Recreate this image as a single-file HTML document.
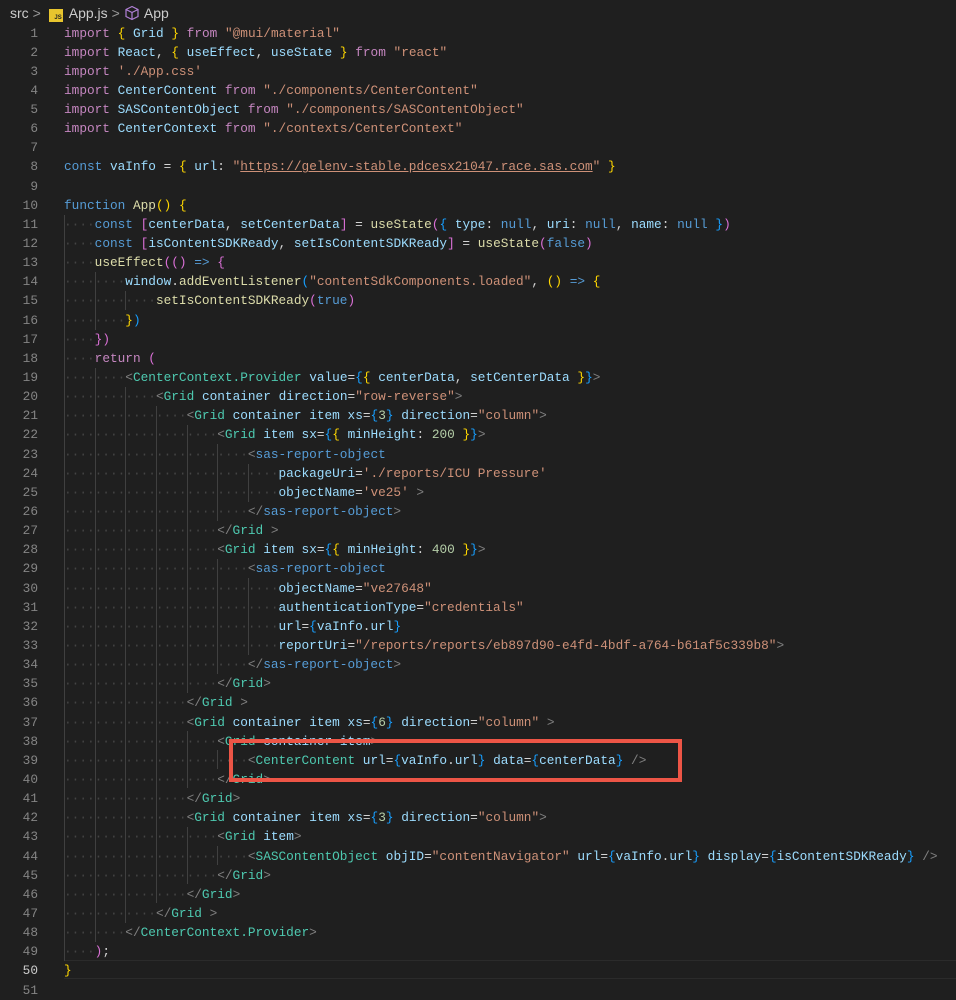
<!DOCTYPE html>
<html><head><meta charset="utf-8"><style>
html,body{margin:0;padding:0;background:#1f1f1f;width:956px;height:999px;overflow:hidden}
.bc{position:absolute;top:3px;left:10px;font:14px "Liberation Sans",sans-serif;color:#cccccc;height:20px;line-height:20px;white-space:nowrap}
.bc .sep{color:#999;margin:0 4px}
.js{display:inline-block;width:14px;height:13px;background:#e8c52e;color:#222;font:bold 6px "Liberation Sans",sans-serif;vertical-align:-1px;text-align:right;line-height:18px;margin-right:6px;padding-right:1px;box-sizing:border-box}
.code{position:absolute;top:23.5px;left:0;font-family:"Liberation Mono",monospace;font-size:12.78px;line-height:19.14px;white-space:pre;color:#d4d4d4}
.ln{display:inline-block;width:38px;text-align:right;color:#858585;margin-right:26px}
.cur .ln{color:#cccccc}
.k{color:#c586c0}.b{color:#569cd6}.v{color:#9cdcfe}.s{color:#ce9178}.f{color:#dcdcaa}.t{color:#4ec9b0}.p{color:#808080}.n{color:#b5cea8}.y{color:#ffd700}.m{color:#da70d6}.c{color:#179fff}.d{color:#444}
.box{position:absolute;left:229px;top:739px;width:445px;height:35px;border:4px solid #ec5546}
.curline{position:absolute;left:64px;top:960px;width:892px;height:17px;border-top:1px solid #2b2b2b;border-bottom:1px solid #2b2b2b}
.g{position:absolute;width:1px;background:#404040}
</style></head><body>
<div class="bc">src<span class="sep">&gt;</span> <span class="js">JS</span>App.js<span class="sep">&gt;</span><svg width="16" height="16" viewBox="0 0 16 16" style="vertical-align:-3px;margin-right:4px"><path d="M8 1.5 14 4.5v7L8 14.5 2 11.5v-7Z M2 4.5 8 7.5 14 4.5 M8 7.5v7" fill="none" stroke="#b180d7" stroke-width="1.2"/></svg>App</div>
<div class="curline"></div>
<!-- indent guides: top = 23.5+(n-1)*19.14 -->
<div class="g" style="left:64px;top:215px;height:746px"></div>
<div class="g" style="left:95px;top:272px;height:58px"></div>
<div class="g" style="left:95px;top:368px;height:574px"></div>
<div class="g" style="left:125px;top:291px;height:19px"></div>
<div class="g" style="left:125px;top:387px;height:536px"></div>
<div class="g" style="left:156px;top:406px;height:497px"></div>
<div class="g" style="left:187px;top:425px;height:268px"></div>
<div class="g" style="left:187px;top:731px;height:57px"></div>
<div class="g" style="left:187px;top:827px;height:57px"></div>
<div class="g" style="left:217px;top:444px;height:77px"></div>
<div class="g" style="left:217px;top:559px;height:115px"></div>
<div class="g" style="left:217px;top:750px;height:19px"></div>
<div class="g" style="left:217px;top:846px;height:19px"></div>
<div class="g" style="left:248px;top:464px;height:38px"></div>
<div class="g" style="left:248px;top:578px;height:77px"></div>
<div class="code"><div><span class="ln">1</span><span class="k">import</span> <span class="y">{</span> <span class="v">Grid</span> <span class="y">}</span> <span class="k">from</span> <span class="s">"@mui/material"</span></div><div><span class="ln">2</span><span class="k">import</span> <span class="v">React</span>, <span class="y">{</span> <span class="v">useEffect</span>, <span class="v">useState</span> <span class="y">}</span> <span class="k">from</span> <span class="s">"react"</span></div><div><span class="ln">3</span><span class="k">import</span> <span class="s">'./App.css'</span></div><div><span class="ln">4</span><span class="k">import</span> <span class="v">CenterContent</span> <span class="k">from</span> <span class="s">"./components/CenterContent"</span></div><div><span class="ln">5</span><span class="k">import</span> <span class="v">SASContentObject</span> <span class="k">from</span> <span class="s">"./components/SASContentObject"</span></div><div><span class="ln">6</span><span class="k">import</span> <span class="v">CenterContext</span> <span class="k">from</span> <span class="s">"./contexts/CenterContext"</span></div><div><span class="ln">7</span></div><div><span class="ln">8</span><span class="b">const</span> <span class="v">vaInfo</span> = <span class="y">{</span> <span class="v">url</span>: <span class="s">"<u>https://gelenv-stable.pdcesx21047.race.sas.com</u>"</span> <span class="y">}</span></div><div><span class="ln">9</span></div><div><span class="ln">10</span><span class="b">function</span> <span class="f">App</span><span class="y">()</span> <span class="y">{</span></div><div><span class="ln">11</span><span class="d">····</span><span class="b">const</span> <span class="m">[</span><span class="v">centerData</span>, <span class="v">setCenterData</span><span class="m">]</span> = <span class="f">useState</span><span class="m">(</span><span class="c">{</span> <span class="v">type</span>: <span class="b">null</span>, <span class="v">uri</span>: <span class="b">null</span>, <span class="v">name</span>: <span class="b">null</span> <span class="c">}</span><span class="m">)</span></div><div><span class="ln">12</span><span class="d">····</span><span class="b">const</span> <span class="m">[</span><span class="v">isContentSDKReady</span>, <span class="v">setIsContentSDKReady</span><span class="m">]</span> = <span class="f">useState</span><span class="m">(</span><span class="b">false</span><span class="m">)</span></div><div><span class="ln">13</span><span class="d">····</span><span class="f">useEffect</span><span class="m">(()</span> <span class="b">=&gt;</span> <span class="m">{</span></div><div><span class="ln">14</span><span class="d">········</span><span class="v">window</span>.<span class="f">addEventListener</span><span class="c">(</span><span class="s">"contentSdkComponents.loaded"</span>, <span class="y">()</span> <span class="b">=&gt;</span> <span class="y">{</span></div><div><span class="ln">15</span><span class="d">············</span><span class="f">setIsContentSDKReady</span><span class="m">(</span><span class="b">true</span><span class="m">)</span></div><div><span class="ln">16</span><span class="d">········</span><span class="y">}</span><span class="c">)</span></div><div><span class="ln">17</span><span class="d">····</span><span class="m">})</span></div><div><span class="ln">18</span><span class="d">····</span><span class="k">return</span> <span class="m">(</span></div><div><span class="ln">19</span><span class="d">········</span><span class="p">&lt;</span><span class="t">CenterContext.Provider</span> <span class="v">value</span>=<span class="c">{</span><span class="y">{</span> <span class="v">centerData</span>, <span class="v">setCenterData</span> <span class="y">}</span><span class="c">}</span><span class="p">&gt;</span></div><div><span class="ln">20</span><span class="d">············</span><span class="p">&lt;</span><span class="t">Grid</span> <span class="v">container</span> <span class="v">direction</span>=<span class="s">"row-reverse"</span><span class="p">&gt;</span></div><div><span class="ln">21</span><span class="d">················</span><span class="p">&lt;</span><span class="t">Grid</span> <span class="v">container</span> <span class="v">item</span> <span class="v">xs</span>=<span class="c">{</span><span class="n">3</span><span class="c">}</span> <span class="v">direction</span>=<span class="s">"column"</span><span class="p">&gt;</span></div><div><span class="ln">22</span><span class="d">····················</span><span class="p">&lt;</span><span class="t">Grid</span> <span class="v">item</span> <span class="v">sx</span>=<span class="c">{</span><span class="y">{</span> <span class="v">minHeight</span>: <span class="n">200</span> <span class="y">}</span><span class="c">}</span><span class="p">&gt;</span></div><div><span class="ln">23</span><span class="d">························</span><span class="p">&lt;</span><span class="b">sas-report-object</span></div><div><span class="ln">24</span><span class="d">····························</span><span class="v">packageUri</span>=<span class="s">'./reports/ICU Pressure'</span></div><div><span class="ln">25</span><span class="d">····························</span><span class="v">objectName</span>=<span class="s">'ve25'</span> <span class="p">&gt;</span></div><div><span class="ln">26</span><span class="d">························</span><span class="p">&lt;/</span><span class="b">sas-report-object</span><span class="p">&gt;</span></div><div><span class="ln">27</span><span class="d">····················</span><span class="p">&lt;/</span><span class="t">Grid</span> <span class="p">&gt;</span></div><div><span class="ln">28</span><span class="d">····················</span><span class="p">&lt;</span><span class="t">Grid</span> <span class="v">item</span> <span class="v">sx</span>=<span class="c">{</span><span class="y">{</span> <span class="v">minHeight</span>: <span class="n">400</span> <span class="y">}</span><span class="c">}</span><span class="p">&gt;</span></div><div><span class="ln">29</span><span class="d">························</span><span class="p">&lt;</span><span class="b">sas-report-object</span></div><div><span class="ln">30</span><span class="d">····························</span><span class="v">objectName</span>=<span class="s">"ve27648"</span></div><div><span class="ln">31</span><span class="d">····························</span><span class="v">authenticationType</span>=<span class="s">"credentials"</span></div><div><span class="ln">32</span><span class="d">····························</span><span class="v">url</span>=<span class="c">{</span><span class="v">vaInfo</span>.<span class="v">url</span><span class="c">}</span></div><div><span class="ln">33</span><span class="d">····························</span><span class="v">reportUri</span>=<span class="s">"/reports/reports/eb897d90-e4fd-4bdf-a764-b61af5c339b8"</span><span class="p">&gt;</span></div><div><span class="ln">34</span><span class="d">························</span><span class="p">&lt;/</span><span class="b">sas-report-object</span><span class="p">&gt;</span></div><div><span class="ln">35</span><span class="d">····················</span><span class="p">&lt;/</span><span class="t">Grid</span><span class="p">&gt;</span></div><div><span class="ln">36</span><span class="d">················</span><span class="p">&lt;/</span><span class="t">Grid</span> <span class="p">&gt;</span></div><div><span class="ln">37</span><span class="d">················</span><span class="p">&lt;</span><span class="t">Grid</span> <span class="v">container</span> <span class="v">item</span> <span class="v">xs</span>=<span class="c">{</span><span class="n">6</span><span class="c">}</span> <span class="v">direction</span>=<span class="s">"column"</span> <span class="p">&gt;</span></div><div><span class="ln">38</span><span class="d">····················</span><span class="p">&lt;</span><span class="t">Grid</span> <span class="v">container</span> <span class="v">item</span><span class="p">&gt;</span></div><div><span class="ln">39</span><span class="d">························</span><span class="p">&lt;</span><span class="t">CenterContent</span> <span class="v">url</span>=<span class="c">{</span><span class="v">vaInfo</span>.<span class="v">url</span><span class="c">}</span> <span class="v">data</span>=<span class="c">{</span><span class="v">centerData</span><span class="c">}</span> <span class="p">/&gt;</span></div><div><span class="ln">40</span><span class="d">····················</span><span class="p">&lt;/</span><span class="t">Grid</span><span class="p">&gt;</span></div><div><span class="ln">41</span><span class="d">················</span><span class="p">&lt;/</span><span class="t">Grid</span><span class="p">&gt;</span></div><div><span class="ln">42</span><span class="d">················</span><span class="p">&lt;</span><span class="t">Grid</span> <span class="v">container</span> <span class="v">item</span> <span class="v">xs</span>=<span class="c">{</span><span class="n">3</span><span class="c">}</span> <span class="v">direction</span>=<span class="s">"column"</span><span class="p">&gt;</span></div><div><span class="ln">43</span><span class="d">····················</span><span class="p">&lt;</span><span class="t">Grid</span> <span class="v">item</span><span class="p">&gt;</span></div><div><span class="ln">44</span><span class="d">························</span><span class="p">&lt;</span><span class="t">SASContentObject</span> <span class="v">objID</span>=<span class="s">"contentNavigator"</span> <span class="v">url</span>=<span class="c">{</span><span class="v">vaInfo</span>.<span class="v">url</span><span class="c">}</span> <span class="v">display</span>=<span class="c">{</span><span class="v">isContentSDKReady</span><span class="c">}</span> <span class="p">/&gt;</span></div><div><span class="ln">45</span><span class="d">····················</span><span class="p">&lt;/</span><span class="t">Grid</span><span class="p">&gt;</span></div><div><span class="ln">46</span><span class="d">················</span><span class="p">&lt;/</span><span class="t">Grid</span><span class="p">&gt;</span></div><div><span class="ln">47</span><span class="d">············</span><span class="p">&lt;/</span><span class="t">Grid</span> <span class="p">&gt;</span></div><div><span class="ln">48</span><span class="d">········</span><span class="p">&lt;/</span><span class="t">CenterContext.Provider</span><span class="p">&gt;</span></div><div><span class="ln">49</span><span class="d">····</span><span class="m">)</span>;</div><div class="cur"><span class="ln">50</span><span class="y">}</span></div><div><span class="ln">51</span></div></div>
<div class="box"></div>
</body></html>
